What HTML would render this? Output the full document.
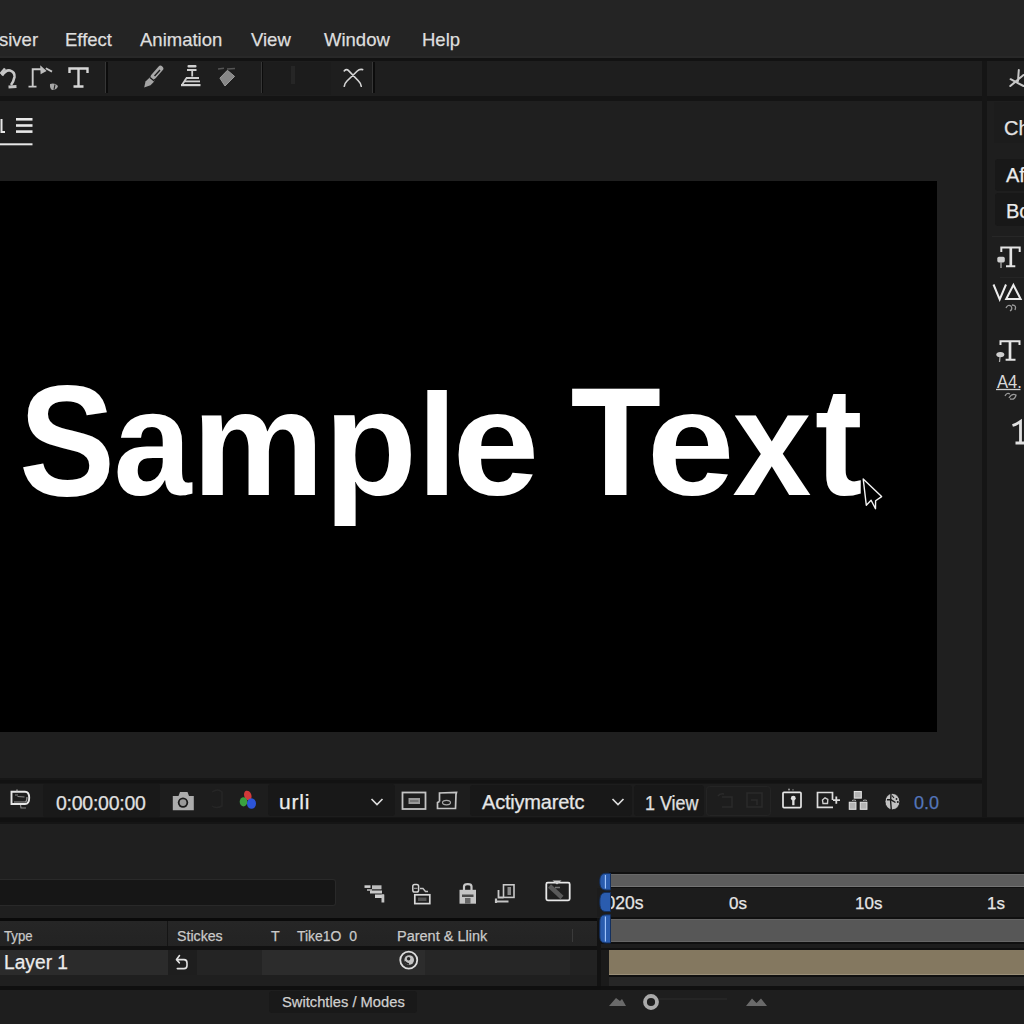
<!DOCTYPE html>
<html><head><meta charset="utf-8">
<style>
*{margin:0;padding:0;box-sizing:border-box}
html,body{width:1024px;height:1024px;overflow:hidden;background:#1f1f1f;font-family:"Liberation Sans",sans-serif;color:#d8d8d8}
.a{position:absolute}
.t{position:absolute;white-space:nowrap;line-height:1;-webkit-text-stroke:0.25px currentColor}
svg{position:absolute;overflow:visible}
</style></head><body>
<!-- menu bar -->
<div class="a" style="left:0;top:0;width:1024px;height:58px;background:#242424"></div>
<div class="a" style="left:0;top:56px;width:1024px;height:2px;background:#282828"></div>
<div class="a" style="left:0;top:58px;width:1024px;height:3px;background:#121212"></div>
<div class="t" style="left:-1px;top:30.5px;font-size:18.5px;color:#dedede">siver</div>
<div class="t" style="left:65px;top:30.5px;font-size:18.5px;color:#dedede">Effect</div>
<div class="t" style="left:140px;top:30.5px;font-size:18.5px;color:#dedede">Animation</div>
<div class="t" style="left:251px;top:30.5px;font-size:18.5px;color:#dedede">View</div>
<div class="t" style="left:324px;top:30.5px;font-size:18.5px;color:#dedede">Window</div>
<div class="t" style="left:422px;top:30.5px;font-size:18.5px;color:#dedede">Help</div>

<!-- toolbar -->
<div class="a" style="left:0;top:61px;width:982px;height:35px;background:#1e1e1e"></div>
<div class="a" style="left:0;top:96px;width:1024px;height:5px;background:#141414"></div>
<div class="a" style="left:987px;top:61px;width:37px;height:35px;background:#1e1e1e"></div>
<!-- separators -->
<div class="a" style="left:105px;top:62px;width:1px;height:31px;background:#363636"></div><div class="a" style="left:106px;top:62px;width:1.5px;height:31px;background:#0c0c0c"></div>
<div class="a" style="left:261px;top:62px;width:1px;height:31px;background:#363636"></div><div class="a" style="left:262px;top:62px;width:1.5px;height:31px;background:#0c0c0c"></div>
<div class="a" style="left:372px;top:62px;width:1px;height:31px;background:#363636"></div><div class="a" style="left:373px;top:62px;width:1.5px;height:31px;background:#0c0c0c"></div>
<div class="a" style="left:263px;top:62px;width:68px;height:33px;background:#1c1c1c"></div>

<!-- viewer panel -->
<div class="a" style="left:0;top:101px;width:982px;height:677px;background:#1f1f1f"></div>
<div class="a" style="left:0;top:181px;width:937px;height:551px;background:#000"></div>

<!-- vertical divider -->
<div class="a" style="left:982px;top:61px;width:5px;height:763px;background:#151515"></div>

<!-- right panel -->
<div class="a" style="left:987px;top:101px;width:37px;height:723px;background:#1e1e1e"></div>

<!-- viewer footer -->
<div class="a" style="left:0;top:778px;width:982px;height:6px;background:#161616"></div>
<div class="a" style="left:0;top:780px;width:982px;height:3px;background:#121212"></div>
<div class="a" style="left:0;top:784px;width:982px;height:33px;background:#1d1d1d"></div>
<div class="a" style="left:0;top:817px;width:1024px;height:7px;background:#151515"></div>
<div class="a" style="left:0;top:818px;width:1024px;height:4px;background:#111"></div>

<!-- timeline panel -->
<div class="a" style="left:0;top:824px;width:1024px;height:200px;background:#1f1f1f"></div>

<!-- viewer tab -->
<div class="a" style="left:0;top:118px;width:4px;height:15px;background:none"></div>
<svg class="a" style="left:0;top:0" width="1024" height="200">
<path d="M1.5 119 L1.5 132 L5 132" fill="none" stroke="#e8e8e8" stroke-width="2"/>
<rect x="16" y="118" width="16.5" height="2.6" fill="#e8e8e8"/>
<rect x="16" y="124.2" width="16.5" height="2.6" fill="#e8e8e8"/>
<rect x="16" y="130.3" width="16.5" height="2.6" fill="#e8e8e8"/>
<rect x="0" y="143.3" width="32.5" height="2" fill="#e8e8e8"/>
</svg>
<!-- toolbar icons -->
<svg class="a" style="left:0;top:0" width="400" height="100" fill="none" stroke="#cfcfcf" stroke-width="2">
<!-- squiggle -->
<path d="M0.5 74 L5 68.5" stroke="#c4c4c4" stroke-width="2.6"/>
<path d="M2 75.5 Q6 69.5 10 70.5 Q15 72 14.5 77 Q13.5 82 11 85" stroke="#c8c8c8" stroke-width="2.6"/>
<path d="M8.5 87 L16.5 86.5" stroke="#c4c4c4" stroke-width="2.8"/>
<!-- gamma arrow -->
<path d="M28.5 86.6 L36.5 86.6 M32.7 86.6 L32.7 69.3 L41 69.3" stroke="#cacaca" stroke-width="1.9"/>
<path d="M40.2 65.3 L46.6 71 L40.6 74.2 Z" fill="#bdbdbd" stroke="none"/>
<path d="M45.8 68.3 L52 71.6" stroke="#c4c4c4" stroke-width="1.8"/>
<path d="M50 84 Q55 82.5 58 86 Q57 90 52 90 Q49.5 88 50 84 Z" fill="#a8a8a8" stroke="none"/>
<path d="M55 84.5 L54 89.5" stroke="#1e1e1e" stroke-width="1.1"/>
<!-- T serif -->
<path d="M69.5 73 L69.5 68.5 L87.5 68.5 L87.5 73 M78.5 68.5 L78.5 86.5 M73.5 86.5 L83.5 86.5" stroke="#d6d6d6" stroke-width="2.4"/>
<!-- brush -->
<path d="M144.2 87.5 L145.5 81.5 L150.5 76.8 L155 80.8 L150.5 85.2 Z" fill="#a4a4a4" stroke="none"/>
<path d="M153.5 76.5 L160.5 68.5" stroke="#a8a8a8" stroke-width="5.6" stroke-linecap="round"/>
<path d="M154.5 76 L160 70" stroke="#1e1e1e" stroke-width="1.4"/>
<path d="M150 77.5 L154.8 81.6" stroke="#1a1a1a" stroke-width="1.3"/>
<!-- stamp -->
<rect x="187.5" y="65" width="9" height="2.6" rx="1" fill="#cfcfcf" stroke="none"/>
<rect x="187" y="69" width="9.5" height="2" fill="#cfcfcf" stroke="none"/>
<rect x="191.3" y="71" width="1.8" height="5.5" fill="#cfcfcf" stroke="none"/>
<rect x="186" y="77" width="13" height="2" fill="#cfcfcf" stroke="none"/>
<rect x="184.5" y="80.5" width="15.5" height="1.8" fill="#cfcfcf" stroke="none"/>
<rect x="181" y="84" width="19.5" height="2.2" fill="#d4d4d4" stroke="none"/>
<path d="M182 85 L186.5 78" stroke="#cfcfcf" stroke-width="1.8"/>
<!-- eraser -->
<path d="M227.4 70.3 L234.6 76.4 L225 86 L219.9 78.1 Z" fill="#878787" stroke="#9c9c9c" stroke-width="1" stroke-linejoin="round"/>
<path d="M218 69 L224 68.3 M227 69 L235 68.5" stroke="#555" stroke-width="1.5"/>
<!-- dim icon -->
<rect x="291" y="66" width="4" height="18" fill="#262626" stroke="none"/>
<!-- X -->
<path d="M344.3 70.8 Q346.5 68.6 348.8 70.8 L358.5 81 Q361 83.5 361.2 86.2 M362.6 69.6 Q359.5 68.9 357.3 71 L347 81 Q344.5 83.5 344.3 86.2" stroke="#d4d4d4" stroke-width="1.7" stroke-linecap="round"/>
</svg>
<!-- right panel toolbar icon -->
<svg class="a" style="left:0;top:0" width="1024" height="100">
<path d="M1018.8 70 L1018 81 M1010.6 79.2 L1023.5 86 M1010.3 86 L1023.5 75" stroke="#c8c8c8" stroke-width="2" stroke-linecap="round" fill="none"/>
</svg>
<!-- right panel content -->
<div class="a" style="left:994px;top:102px;width:30px;height:41px;background:#1c1c1c"></div>
<div class="t" style="left:1004px;top:117.5px;font-size:20px;color:#e4e4e4">Ch</div>
<div class="a" style="left:995px;top:159px;width:29px;height:32px;background:#181818;border-radius:3px 0 0 3px"></div>
<div class="a" style="left:995px;top:193px;width:29px;height:33px;background:#181818;border-radius:3px 0 0 3px"></div>
<div class="t" style="left:1006px;top:164.5px;font-size:20px;color:#ececec">Af</div>
<div class="t" style="left:1006px;top:200.7px;font-size:20px;color:#ececec">Bo</div>
<div class="a" style="left:1000px;top:277px;width:24px;height:1px;background:#252525"></div>
<div class="a" style="left:992px;top:236px;width:32px;height:1px;background:#272727"></div>
<svg class="a" style="left:0;top:0" width="1024" height="460" fill="none">
<path d="M1001.3 252 L1001.3 247.6 L1019.7 247.6 L1019.7 252 M1006 266.3 L1015.3 266.3" stroke="#e4e4e4" stroke-width="2"/>
<path d="M1010.8 247.5 L1010.8 266" stroke="#e4e4e4" stroke-width="2.7"/>
<rect x="997.3" y="256.8" width="7.5" height="5.6" rx="1.6" fill="#cfcfcf"/>
<path d="M1001 262 L1001 268" stroke="#aaa" stroke-width="1.3"/>
<path d="M993.5 284.5 L999.7 299.5 L1006 284.5" stroke="#ececec" stroke-width="2"/>
<path d="M1013.4 285 L1006.2 299 L1020.6 299 Z" stroke="#ececec" stroke-width="2"/>
<path d="M1006 308 Q1008 304 1011 306 Q1013 309 1010 311 M1012 305 Q1017 305 1015 310" stroke="#9a9a9a" stroke-width="1.3"/>
<path d="M1000.5 345 L1000.5 341.3 L1019.5 341.3 L1019.5 345 M1005.6 359.7 L1015.5 359.7" stroke="#e4e4e4" stroke-width="2"/>
<path d="M1010 341.3 L1010 359.5" stroke="#e4e4e4" stroke-width="2.7"/>
<ellipse cx="1000.3" cy="354.6" rx="4" ry="2.7" fill="#cfcfcf"/>
<path d="M1000 357 L999.5 362" stroke="#aaa" stroke-width="1.3"/>
<text x="997" y="387.5" font-family="Liberation Sans" font-size="17.5" fill="#d8d8d8" textLength="25" lengthAdjust="spacingAndGlyphs">A4.</text>
<path d="M996 389.5 L1020.5 389.5" stroke="#cfcfcf" stroke-width="1.3"/>
<path d="M1005 396 Q1007 392 1010 394 M1009 398 Q1012 393 1016 395 Q1015 400 1010 399" stroke="#9a9a9a" stroke-width="1.3"/>
<path d="M1012.5 425.5 Q1017 424 1020.5 421.5 L1020.5 443 M1015.5 443 L1025 443" stroke="#e0e0e0" stroke-width="2.8"/>
</svg>
<!-- footer toolbar -->
<div class="a" style="left:43px;top:784px;width:117px;height:33px;background:#191919;border-radius:2px"></div>
<div class="t" style="left:56px;top:794px;font-size:19.5px;color:#e0e0e0;letter-spacing:-0.25px">0:00:00:00</div>
<div class="a" style="left:268px;top:784px;width:127px;height:32px;background:#181818;border-radius:3px"></div>
<div class="t" style="left:279px;top:791px;font-size:21px;color:#ececec;letter-spacing:0.8px">urli</div>
<div class="a" style="left:470px;top:785px;width:162px;height:31px;background:#181818;border-radius:3px"></div>
<div class="t" style="left:482px;top:791.5px;font-size:20px;color:#e6e6e6;letter-spacing:-0.2px">Actiymaretc</div>
<div class="a" style="left:634px;top:785px;width:70px;height:31px;background:#181818;border-radius:3px"></div>
<div class="t" style="left:645px;top:794px;font-size:19.5px;color:#e0e0e0;transform-origin:0 0;transform:scaleX(0.92)">1 View</div>
<div class="t" style="left:914px;top:794px;font-size:18px;color:#5476ba">0.0</div>
<svg class="a" style="left:0;top:0" width="1024" height="830" fill="none">
<!-- monitor -->
<path d="M11.5 791.7 L25 791.7 Q29.2 791.7 29.2 797.8 Q29.2 804 25 804 L11.5 804 Z" stroke="#e6e6e6" stroke-width="1.9"/>
<path d="M17 789.5 L17 791.5" stroke="#bbb" stroke-width="1.2"/>
<path d="M14 802 L25.5 802 Q27 801 27 797" stroke="#9a9a9a" stroke-width="1.2"/>
<path d="M15 795 L18 795 M17.5 796.5 L24.5 797" stroke="#8a8a8a" stroke-width="1.1"/>
<path d="M20.5 805 L21 807.8 L26 808" stroke="#8a8a8a" stroke-width="1.2"/>
<!-- camera -->
<path d="M172.8 796 L178.5 796 L180 792 L187.5 792 L189 796 L193.8 796 L193.8 810.3 L172.8 810.3 Z" fill="#acacac"/>
<circle cx="183" cy="802.6" r="5.2" fill="#1a1a1a"/>
<circle cx="183" cy="802.6" r="3.4" fill="#9a9a9a"/>
<!-- dim icon -->
<path d="M212 792 Q218 788 222 792 L222 806 Q216 809 212 806" stroke="#262626" stroke-width="1.5"/>
<!-- rgb -->
<ellipse cx="247.8" cy="795.5" rx="3.6" ry="5" fill="#d23a3a" transform="rotate(-20 247.8 795.5)"/>
<ellipse cx="243.5" cy="801.8" rx="3.8" ry="4.6" fill="#3aa040"/>
<ellipse cx="251.5" cy="803.5" rx="4.5" ry="5.3" fill="#2c54d8"/>
<!-- chevrons -->
<path d="M371.5 799 L377 804.5 L382.5 799" stroke="#dcdcdc" stroke-width="1.7"/>
<path d="M612.5 799 L618 804.5 L623.5 799" stroke="#dcdcdc" stroke-width="1.7"/>
<!-- region icon -->
<rect x="402.5" y="792.5" width="23" height="16.5" stroke="#c4c4c4" stroke-width="1.8"/>
<rect x="408.5" y="798" width="11.5" height="6" fill="#9a9a9a"/>
<path d="M410 801 L418.5 801" stroke="#555" stroke-width="1"/>
<!-- transparency icon -->
<path d="M439.5 801.5 L439.5 793 L456.5 792.5 L456 794.5 M456 794 L455.5 808.5 L437.5 808.5 L437.5 802.5 L439.5 801.5" stroke="#c4c4c4" stroke-width="1.7"/>
<ellipse cx="446.5" cy="802.6" rx="4" ry="2.3" stroke="#a8a8a8" stroke-width="1.2"/>
<!-- dim icons -->
<path d="M718 796 Q720 793 724 794 M722 797 L732 797 L732 807 L722 807" stroke="#2a2a2a" stroke-width="1.6"/>
<path d="M747 793 L762 793 L762 807 L747 807 Z M751 800 L757 800 L757 805" stroke="#2a2a2a" stroke-width="1.6"/>
<rect x="706.5" y="786.5" width="64" height="29" rx="3" stroke="#242424" stroke-width="1"/>
<!-- keyhole icon -->
<rect x="783" y="792.3" width="18" height="15.3" rx="1" stroke="#e6e6e6" stroke-width="1.7"/>
<circle cx="793.3" cy="798.2" r="2.4" fill="#e0e0e0"/>
<rect x="792.2" y="799" width="2.3" height="6.2" fill="#e0e0e0"/>
<circle cx="789" cy="789.4" r="1" fill="#9a9a9a"/><circle cx="793" cy="789.8" r="0.9" fill="#666"/>
<!-- camera plus -->
<path d="M832.5 800 L832.5 792.5 L817.5 792.5 L817.5 807.3 L833 807.3" stroke="#dcdcdc" stroke-width="1.7"/>
<path d="M823 803.5 L822.5 800 L825 797.8 L827.8 799.5 L827.5 803.5 Z" stroke="#cfcfcf" stroke-width="1.4"/>
<path d="M833 800.2 L840 800.2 M836.3 796.5 L836.3 803.8" stroke="#dcdcdc" stroke-width="1.8"/>
<!-- hierarchy -->
<rect x="854.3" y="791.5" width="7" height="6.6" fill="#b4b4b4" stroke="#e0e0e0" stroke-width="1.1"/>
<rect x="849.3" y="802.3" width="6.6" height="7" fill="#b4b4b4" stroke="#e0e0e0" stroke-width="1.1"/>
<rect x="860.3" y="802.3" width="6.6" height="7" fill="#b4b4b4" stroke="#e0e0e0" stroke-width="1.1"/>
<path d="M852 800.5 Q854 799.5 856 800.5 M863 800.5 Q865 799.5 867 800.5" stroke="#aaa" stroke-width="1"/>
<!-- globe -->
<ellipse cx="892.4" cy="801.6" rx="7.4" ry="8.2" fill="#c2c2c2" stroke="#111" stroke-width="0.8"/>
<path d="M891 793.8 Q890 801 891.3 809.5" stroke="#1e1e1e" stroke-width="1.4"/>
<path d="M887 799.8 L891 799.8 L895.5 802.5" stroke="#1e1e1e" stroke-width="1.4"/>
<circle cx="896.5" cy="799" r="0.9" fill="#1e1e1e"/><circle cx="897.8" cy="802" r="1" fill="#1e1e1e"/>
<path d="M892 795.5 L894 798" stroke="#1e1e1e" stroke-width="1.2"/>
</svg>
<!-- timeline -->
<div class="a" style="left:0;top:879px;width:336px;height:27px;background:#161616;border:1.5px solid #292929;border-left:none;border-radius:0 3px 3px 0"></div>
<div class="a" style="left:0;top:918px;width:601px;height:3px;background:#0a0a0a"></div>
<div class="a" style="left:0;top:921px;width:597px;height:25px;background:linear-gradient(#262626,#232323)"></div>
<div class="a" style="left:0;top:946px;width:597px;height:4px;background:#111"></div>
<div class="a" style="left:0;top:950px;width:597px;height:25px;background:#232323"></div>
<div class="a" style="left:0;top:950px;width:168px;height:25px;background:#2b2b2b"></div>
<div class="a" style="left:168px;top:950px;width:29px;height:25px;background:#1e1e1e"></div>
<div class="a" style="left:197px;top:950px;width:65px;height:25px;background:#242424"></div>
<div class="a" style="left:262px;top:950px;width:163px;height:25px;background:#2c2c2c"></div>
<div class="a" style="left:425px;top:950px;width:145px;height:25px;background:#262626"></div>
<div class="a" style="left:570px;top:950px;width:27px;height:25px;background:#222"></div>
<div class="a" style="left:0;top:975px;width:597px;height:11px;background:#1f1f1f"></div>
<div class="a" style="left:167px;top:921px;width:1px;height:25px;background:#151515"></div>
<div class="a" style="left:572px;top:929px;width:1px;height:13px;background:#3a3a3a"></div>
<div class="a" style="left:0;top:986px;width:1024px;height:4px;background:#0f0f0f"></div>
<div class="a" style="left:0;top:990px;width:1024px;height:34px;background:#1e1e1e"></div>
<div class="a" style="left:269px;top:991px;width:148px;height:22px;background:#191919;border-radius:3px"></div>
<div class="t" style="left:282px;top:994px;font-size:15.5px;color:#d0d0d0;transform-origin:0 0;transform:scaleX(0.95)">Switchtles / Modes</div>
<div class="t" style="left:4px;top:928px;font-size:15px;color:#c8c8c8;transform-origin:0 0;transform:scaleX(0.88)">Type</div>
<div class="t" style="left:177px;top:927.5px;font-size:15.5px;color:#cacaca;transform-origin:0 0;transform:scaleX(0.915)">Stickes</div>
<div class="t" style="left:271px;top:927.5px;font-size:15.5px;color:#cacaca;transform-origin:0 0;transform:scaleX(0.915)">T</div>
<div class="t" style="left:297px;top:927.5px;font-size:15.5px;color:#cacaca;transform-origin:0 0;transform:scaleX(0.9)">Tike1O&nbsp;&nbsp;0</div>
<div class="t" style="left:397px;top:927.5px;font-size:15.5px;color:#cacaca;transform-origin:0 0;transform:scaleX(0.935)">Parent &amp; Llink</div>
<div class="t" style="left:4px;top:952px;font-size:20px;color:#ececec;transform-origin:0 0;transform:scaleX(0.96)">Layer 1</div>
<!-- timeline right -->
<div class="a" style="left:597px;top:918px;width:4px;height:68px;background:#121212"></div>
<div class="a" style="left:601px;top:917px;width:423px;height:73px;background:#101010"></div>
<div class="a" style="left:609px;top:872px;width:415px;height:17px;background:#101010"></div>
<div class="a" style="left:611px;top:874px;width:413px;height:13px;background:#5c5c5c;border-top:1px solid #686868;border-bottom:1px solid #747474"></div>
<div class="a" style="left:597px;top:888px;width:427px;height:29px;background:#1c1c1c"></div>
<div class="a" style="left:611px;top:919px;width:413px;height:23px;background:#575757;border-top:1px solid #646464;border-bottom:1px solid #666"></div>
<div class="a" style="left:601px;top:944px;width:423px;height:4px;background:#1d1d1d"></div>
<div class="a" style="left:601px;top:950px;width:8px;height:36px;background:#1a1a1a"></div>
<div class="a" style="left:609px;top:950px;width:415px;height:25px;background:#847860;border-bottom:1px solid #9a8f78"></div>
<div class="a" style="left:609px;top:977px;width:415px;height:9px;background:#262626"></div>
<div class="t" style="left:605.5px;top:895px;font-size:17.5px;color:#e6e6e6">020s</div>
<div class="t" style="left:729px;top:895px;font-size:17px;color:#e6e6e6">0s</div>
<div class="t" style="left:855px;top:895px;font-size:17px;color:#e6e6e6">10s</div>
<div class="t" style="left:987px;top:895px;font-size:17px;color:#e6e6e6">1s</div>
<svg class="a" style="left:0;top:0" width="1024" height="1024" fill="none">
<!-- blue handles -->
<path d="M610.5 873.3 L606 873.3 C600.5 873.3 599.8 877.5 599.8 881.6 C599.8 885.8 600.5 890 606 890 L610.5 890 Z" fill="#2a5cae" stroke="#14305e" stroke-width="1"/>
<path d="M605.4 875 L605.4 888.5" stroke="#a4c8ff" stroke-width="1.1"/>
<path d="M610.5 892.4 L606 892.4 C600.5 892.4 599.8 897 599.8 902 C599.8 907 600.5 911.5 606 911.5 L610.5 911.5 Z" fill="#2a5cae" stroke="#14305e" stroke-width="1"/>
<path d="M610.5 914.8 L606 914.8 C600.5 914.8 599.8 918 599.8 923 L599.8 935 C599.8 940 600.5 943 606 943 L610.5 943 Z" fill="#2a5cae" stroke="#14305e" stroke-width="1"/>
<path d="M605.4 916.5 L605.4 941.5" stroke="#a4c8ff" stroke-width="1.1"/>
<!-- timeline icons -->
<rect x="364.5" y="885.3" width="6" height="2.6" fill="#cfcfcf"/>
<rect x="372" y="885.3" width="9.5" height="4" fill="#bdbdbd"/>
<rect x="367" y="889" width="5" height="2" fill="#9a9a9a"/>
<rect x="370" y="890.5" width="12" height="3" fill="#c8c8c8"/>
<rect x="375" y="894.5" width="9" height="3.5" fill="#d0d0d0"/>
<rect x="381.5" y="894.5" width="2.8" height="8" fill="#c4c4c4"/>
<rect x="412.8" y="884.5" width="5.8" height="7.5" rx="1.8" stroke="#d4d4d4" stroke-width="1.5"/>
<path d="M414 888.3 L417.5 888.3" stroke="#aaa" stroke-width="1"/>
<path d="M420 888.5 L423 888.5 L425.5 891.5 L428 891.5" stroke="#c4c4c4" stroke-width="1.4"/>
<rect x="414.8" y="894.8" width="15" height="8.8" stroke="#d8d8d8" stroke-width="1.7"/>
<rect x="418" y="897.5" width="8.5" height="3.5" fill="#555"/>
<path d="M464 890 L464 886.5 Q464 884.2 467.8 884.2 Q471.5 884.2 471.5 886.5 L471.5 890" stroke="#c8c8c8" stroke-width="2.2"/>
<rect x="459.5" y="889.8" width="16.5" height="13.9" fill="#c4c4c4"/>
<rect x="462" y="894.5" width="11.5" height="2.5" fill="#4a4a4a"/>
<rect x="465" y="898" width="5.5" height="5.7" fill="#666"/>
<rect x="503.5" y="884.8" width="10.5" height="12.6" stroke="#c8c8c8" stroke-width="1.6"/>
<rect x="507.5" y="887" width="3.5" height="8" fill="#8a8a8a"/>
<path d="M498.5 890 L498.5 897.5 L503.5 897.5" stroke="#c8c8c8" stroke-width="1.8"/>
<path d="M496 898.5 L496 903 M496 901.5 L508.5 901.5" stroke="#c4c4c4" stroke-width="2.2"/>
<rect x="546.3" y="882.7" width="23.4" height="17.6" rx="1.5" stroke="#e8e8e8" stroke-width="1.8"/>
<path d="M552.5 880.5 L561.5 880.5 L557 884.5 Z" fill="#cfcfcf"/>
<path d="M549.5 886 L562 897.5" stroke="#5a5a5a" stroke-width="4.5"/>
<path d="M555 887.5 L560 887.5" stroke="#777" stroke-width="1.5"/>
<!-- undo -->
<path d="M179.5 955.6 L176.5 959.6 L179.3 962.8 M176.5 959.6 L184 959.6 Q187 959.6 187 963 L187 965.5 Q187 968.6 184 968.6 L177.3 968.6" stroke="#e2e2e2" stroke-width="1.6" stroke-linecap="round" stroke-linejoin="round"/>
<!-- parent circle -->
<circle cx="408.75" cy="960.1" r="8.5" stroke="#dedede" stroke-width="1.8"/>
<circle cx="409.2" cy="960" r="4.8" fill="#c4c4c4"/>
<circle cx="408.6" cy="958.8" r="1.7" fill="#262626"/>
<path d="M404.8 961.5 Q406.5 963.8 409 964" stroke="#262626" stroke-width="1.3"/>
<!-- zoom slider -->
<path d="M609 1006 L616 998 L620 1001 L622 999 L626 1006 Z" fill="#6a6a6a"/>
<circle cx="651" cy="1002" r="6" stroke="#aaaaaa" stroke-width="3.8"/>
<path d="M659 999 L727 999" stroke="#2c2c2c" stroke-width="1"/>
<path d="M746 1006 L752 998.5 L756.5 1003 L761 998.5 L767 1006 Z" fill="#6a6a6a"/>
</svg>
<!-- Sample Text -->
<svg class="a" style="left:0;top:0" width="1024" height="1024" font-family="Liberation Sans" font-weight="bold" font-size="150" fill="#fff">
<text transform="translate(18.9 495) scale(0.960 1.057)">S</text>
<text transform="translate(113.5 495) scale(0.935 1.000)">a</text>
<text transform="translate(192.1 495) scale(0.991 1.000)">m</text>
<text transform="translate(324.1 495) scale(1.016 1.000)">p</text>
<text transform="translate(417.6 495) scale(0.943 0.970)">l</text>
<text transform="translate(452.5 495) scale(1.040 1.000)">e</text>
<text transform="translate(570.5 495) scale(0.988 1.025)">T</text>
<text transform="translate(646.7 495) scale(1.052 1.000)">e</text>
<text transform="translate(732.5 495) scale(0.946 1.000)">x</text>
<text transform="translate(815.0 495) scale(0.950 1.027)">t</text>
</svg>
<!-- cursor -->
<svg class="a" style="left:0;top:0" width="1024" height="1024"><path d="M863.2 479 L866.3 505.2 L871.1 500.3 L875.5 508.7 L875.6 500.8 L881.6 496.6 Z" fill="#000" stroke="#f4f4f4" stroke-width="1.4" stroke-linejoin="round"/></svg>
</body></html>
